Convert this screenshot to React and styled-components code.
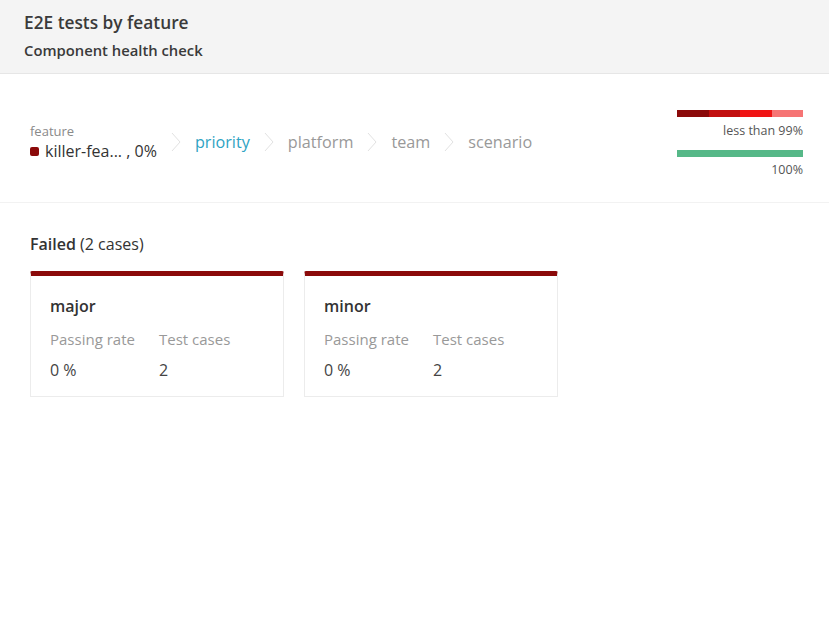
import React from 'react';
import styled, { createGlobalStyle } from 'styled-components';

const GlobalStyle = createGlobalStyle`
  body {
    margin: 0;
    background: #fff;
    font-family: "Open Sans", "Noto Sans", sans-serif;
    color: #333;
  }
`;

const Header = styled.header`
  background: #f4f4f4;
  border-bottom: 1px solid #e6e6e6;
  padding: 11px 24px 12px;
  height: 50px;
`;

const Title = styled.h1`
  margin: 0;
  font-size: 17.3px;
  font-weight: 600;
  color: #3a3a3a;
  line-height: 24px;
`;

const Subtitle = styled.h2`
  margin: 5px 0 0;
  font-size: 14.8px;
  font-weight: 600;
  color: #3a3a3a;
  line-height: 20px;
`;

const Toolbar = styled.div`
  display: flex;
  align-items: flex-start;
  justify-content: space-between;
  padding: 34px 26px 0 30px;
  height: 94px;
  border-bottom: 1px solid #f2f2f2;
`;

const Crumbs = styled.div`
  display: flex;
  align-items: center;
  margin-top: 14px;
`;

const Current = styled.div`
  display: flex;
  flex-direction: column;
`;

const Label = styled.span`
  font-size: 13px;
  color: #8a8a8a;
  line-height: 18px;
`;

const Value = styled.span`
  display: flex;
  align-items: center;
  font-size: 16px;
  color: #333;
  line-height: 22px;
`;

const Dot = styled.span`
  width: 9px;
  height: 9px;
  border-radius: 2px;
  background: #8b0a0a;
  margin-right: 6px;
`;

const Chevron = styled.svg`
  margin: 0 14px 0 14px;
`;

const Crumb = styled.span`
  font-size: 16.2px;
  color: ${p => (p.active ? '#2ea3c3' : '#999')};
  line-height: 22px;
`;

const Legend = styled.div`
  display: flex;
  flex-direction: column;
  align-items: flex-end;
  width: 126px;
  margin-top: 2px;
`;

const Bar = styled.div`
  display: flex;
  width: 126px;
  height: 7px;
`;

const Seg = styled.span`
  flex: 1;
  background: ${p => p.color};
`;

const LegendText = styled.span`
  font-size: 12.5px;
  color: #555;
  line-height: 16px;
  margin: ${p => (p.last ? '5px 0 0' : '6px 0 11px')};
`;

const Section = styled.section`
  padding: 31px 30px;
`;

const SectionTitle = styled.div`
  font-size: 16px;
  color: #333;
  margin-bottom: 17px;
  line-height: 20px;

  b {
    font-weight: 600;
  }
`;

const Cards = styled.div`
  display: flex;
  gap: 20px;
`;

const Card = styled.div`
  width: 254px;
  box-sizing: border-box;
  border: 1px solid #ececec;
  border-top: 5px solid #8b0a0a;
  border-top-left-radius: 2px;
  border-top-right-radius: 2px;
  padding: 19px 19px 14px;
  height: 126px;
`;

const CardTitle = styled.div`
  font-size: 16px;
  font-weight: 600;
  color: #333;
  line-height: 22px;
  margin-bottom: 11px;
`;

const Stats = styled.div`
  display: grid;
  grid-template-columns: 109px auto;
  row-gap: 9px;
`;

const StatLabel = styled.span`
  font-size: 15px;
  color: #999;
  line-height: 22px;
`;

const StatValue = styled.span`
  font-size: 16px;
  color: #444;
  line-height: 22px;
`;

const ChevronIcon = () => (
  <Chevron width="10" height="20" viewBox="0 0 10 20">
    <path d="M1 1 L9 10 L1 19" fill="none" stroke="#e2e2e2" strokeWidth="1" />
  </Chevron>
);

const cases = [
  { name: 'major', rate: '0 %', count: 2 },
  { name: 'minor', rate: '0 %', count: 2 },
];

export default function App() {
  return (
    <>
      <GlobalStyle />
      <Header>
        <Title>E2E tests by feature</Title>
        <Subtitle>Component health check</Subtitle>
      </Header>
      <Toolbar>
        <Crumbs>
          <Current>
            <Label>feature</Label>
            <Value>
              <Dot />
              killer-fea... , 0%
            </Value>
          </Current>
          <ChevronIcon />
          <Crumb active>priority</Crumb>
          <ChevronIcon />
          <Crumb>platform</Crumb>
          <ChevronIcon />
          <Crumb>team</Crumb>
          <ChevronIcon />
          <Crumb>scenario</Crumb>
        </Crumbs>
        <Legend>
          <Bar>
            <Seg color="#8b0a0a" />
            <Seg color="#c20f0f" />
            <Seg color="#f01414" />
            <Seg color="#f67474" />
          </Bar>
          <LegendText>less than 99%</LegendText>
          <Bar>
            <Seg color="#56b888" />
          </Bar>
          <LegendText last>100%</LegendText>
        </Legend>
      </Toolbar>
      <Section>
        <SectionTitle>
          <b>Failed</b> (2 cases)
        </SectionTitle>
        <Cards>
          {cases.map(c => (
            <Card key={c.name}>
              <CardTitle>{c.name}</CardTitle>
              <Stats>
                <StatLabel>Passing rate</StatLabel>
                <StatLabel>Test cases</StatLabel>
                <StatValue>{c.rate}</StatValue>
                <StatValue>{c.count}</StatValue>
              </Stats>
            </Card>
          ))}
        </Cards>
      </Section>
    </>
  );
}
